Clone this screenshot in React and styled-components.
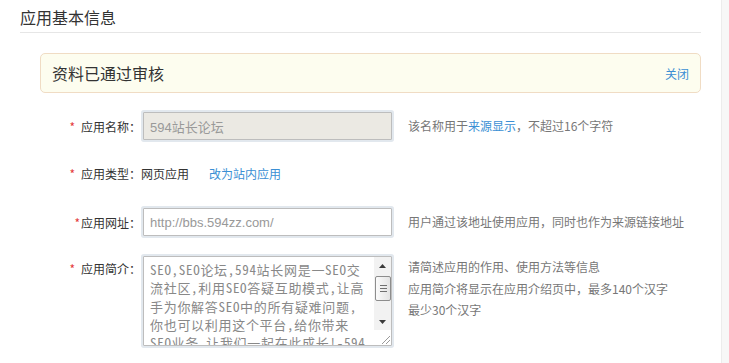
import React from 'react';
import styled, { createGlobalStyle } from 'styled-components';

const GlobalStyle = createGlobalStyle`
   html, body {
      margin: 0;
      padding: 0;
      background: #fff;
      font-family: "Noto Sans CJK SC", "Noto Sans", sans-serif;
   }
`;

const Page = styled.div`
   display: flex;
   min-height: 363px;
`;
const Main = styled.div`
   flex: 1;
   padding: 0 20px;
`;
const SideStrip = styled.div`
   width: 7px;
   border-left: 1px solid #ececec;
   background: #f7f7f7;
`;
const Title = styled.h2`
   margin: 0;
   padding: 6px 0 4px;
   font-size: 16px;
   line-height: 22px;
   font-weight: normal;
   color: #333;
   border-bottom: 1px solid #e6e6e6;
`;
const Notice = styled.div`
   margin: 20px 0 0 20px;
   height: 38px;
   padding: 0 11px;
   display: flex;
   align-items: center;
   justify-content: space-between;
   background: #fdfdef;
   border: 1px solid #f0dcc4;
   border-radius: 5px;
   font-size: 16px;
   color: #333;
`;
const Link = styled.a`
   color: #3b8fd4;
   font-size: 12px;
   text-decoration: none;
   cursor: pointer;
   margin-left: ${(p) => p.gap || 0}px;
`;
const Form = styled.div`
   margin-top: 17px;
   display: flex;
   flex-direction: column;
`;
const Row = styled.div`
   display: flex;
   align-items: ${(p) => (p.top ? 'flex-start' : 'center')};
   min-height: ${(p) => p.h || 32}px;
   margin-bottom: ${(p) => p.mb || 16}px;
   font-size: 12px;
   color: #333;
`;
const Label = styled.div`
   width: 121px;
   flex-shrink: 0;
   display: flex;
   justify-content: flex-end;
   align-items: center;
   padding-top: ${(p) => p.pt || 0}px;
`;
const Star = styled.span`
   color: #e4393c;
   margin-right: ${(p) => (p.tight ? 1 : 6)}px;
`;
const Field = styled.div`
   width: 253px;
   flex-shrink: 0;
   padding: 2px;
   box-sizing: border-box;
`;
const Input = styled.input`
   display: block;
   width: 100%;
   height: 28px;
   box-sizing: border-box;
   border: 1px solid #bdbdbd;
   box-shadow: 0 0 0 2px #e2e8ee;
   border-radius: 1px;
   padding: 0 6px;
   font-family: "Liberation Sans", "Noto Sans CJK SC", sans-serif;
   font-size: 13px;
   color: #999;
   background: ${(p) => (p.disabled ? '#ebe9e3' : '#fff')};
   outline: none;
`;
const AreaBox = styled.div`
   display: flex;
   height: 90px;
   box-sizing: border-box;
   border: 1px solid #bdbdbd;
   box-shadow: 0 0 0 2px #e2e8ee;
   border-radius: 1px;
   background: #fff;
   overflow: hidden;
`;
const AreaText = styled.textarea`
   flex: 1;
   min-width: 0;
   border: none;
   margin: 0;
   padding: 4px 7px 0 6px;
   font-family: "Noto Sans CJK SC", sans-serif;
   font-feature-settings: "hwid" 1;
   font-size: 13px;
   line-height: 18.3px;
   letter-spacing: 0.7px;
   color: #888;
   outline: none;
   resize: none;
   overflow: hidden;
   background: transparent;
`;
const ScrollCol = styled.div`
   width: 17px;
   flex-shrink: 0;
   display: flex;
   flex-direction: column;
`;
const Track = styled.div`
   height: 73px;
   display: flex;
   flex-direction: column;
   background: #f2f2f2;
`;
const ArrowBtn = styled.div`
   height: 17px;
   display: flex;
   align-items: center;
   justify-content: center;
`;
const ThumbSlot = styled.div`
   flex: 1;
   padding: 2px 0 0 1px;
`;
const Thumb = styled.div`
   height: 25px;
   box-sizing: border-box;
   border: 1px solid #8d8d8d;
   border-radius: 2px;
   background: linear-gradient(to right, #fbfbfb, #e3e3e3);
   display: flex;
   flex-direction: column;
   align-items: center;
   justify-content: center;
   gap: 2px;
`;
const Grip = styled.span`
   display: block;
   width: 7px;
   height: 1px;
   background: #707070;
`;
const Corner = styled.div`
   flex: 1;
   display: flex;
   align-items: flex-end;
   justify-content: flex-end;
`;
const Hint = styled.div`
   margin-left: 14px;
   color: #777;
   font-size: 12px;
   line-height: 21.5px;
   padding-top: ${(p) => p.pt || 0}px;
`;
const HintLink = styled.span`
   color: #3b8fd4;
`;

const intro =
   'SEO,SEO论坛,594站长网是一SEO交流社区,利用SEO答疑互助模式,让高手为你解答SEO中的所有疑难问题,你也可以利用这个平台,给你带来SEO业务,让我们一起在此成长!-594站长论坛';

const ArrowIcon = ({ down }) => (
   <svg width="7" height="4" viewBox="0 0 7 4">
      <path d={down ? 'M0 0L3.5 4L7 0z' : 'M0 4L3.5 0L7 4z'} fill="#3a3a3a" />
   </svg>
);

const App = () => {
   return (
      <>
         <GlobalStyle />
         <Page>
            <Main>
               <Title>应用基本信息</Title>
               <Notice>
                  <span>资料已通过审核</span>
                  <Link>关闭</Link>
               </Notice>
               <Form>
                  <Row>
                     <Label>
                        <Star>*</Star>应用名称：
                     </Label>
                     <Field>
                        <Input disabled defaultValue="594站长论坛" />
                     </Field>
                     <Hint>
                        该名称用于<HintLink>来源显示</HintLink>，不超过16个字符
                     </Hint>
                  </Row>
                  <Row h={30} mb={18}>
                     <Label>
                        <Star>*</Star>应用类型：
                     </Label>
                     <span>网页应用</span>
                     <Link gap={20}>改为站内应用</Link>
                  </Row>
                  <Row>
                     <Label>
                        <Star tight>*</Star>应用网址：
                     </Label>
                     <Field>
                        <Input defaultValue="http://bbs.594zz.com/" />
                     </Field>
                     <Hint>用户通过该地址使用应用，同时也作为来源链接地址</Hint>
                  </Row>
                  <Row top>
                     <Label pt={6}>
                        <Star>*</Star>应用简介：
                     </Label>
                     <Field>
                        <AreaBox>
                           <AreaText defaultValue={intro} />
                           <ScrollCol>
                              <Track>
                                 <ArrowBtn>
                                    <ArrowIcon />
                                 </ArrowBtn>
                                 <ThumbSlot>
                                    <Thumb>
                                       <Grip />
                                       <Grip />
                                       <Grip />
                                    </Thumb>
                                 </ThumbSlot>
                                 <ArrowBtn>
                                    <ArrowIcon down />
                                 </ArrowBtn>
                              </Track>
                              <Corner>
                                 <svg width="12" height="12" viewBox="0 0 12 12">
                                    <path d="M11 3L3 11M11 7L7 11" stroke="#9a9a9a" strokeWidth="1" />
                                 </svg>
                              </Corner>
                           </ScrollCol>
                        </AreaBox>
                     </Field>
                     <Hint pt={2}>
                        请简述应用的作用、使用方法等信息
                        <br />
                        应用简介将显示在应用介绍页中，最多140个汉字
                        <br />
                        最少30个汉字
                     </Hint>
                  </Row>
               </Form>
            </Main>
            <SideStrip />
         </Page>
      </>
   );
};

export default App;
